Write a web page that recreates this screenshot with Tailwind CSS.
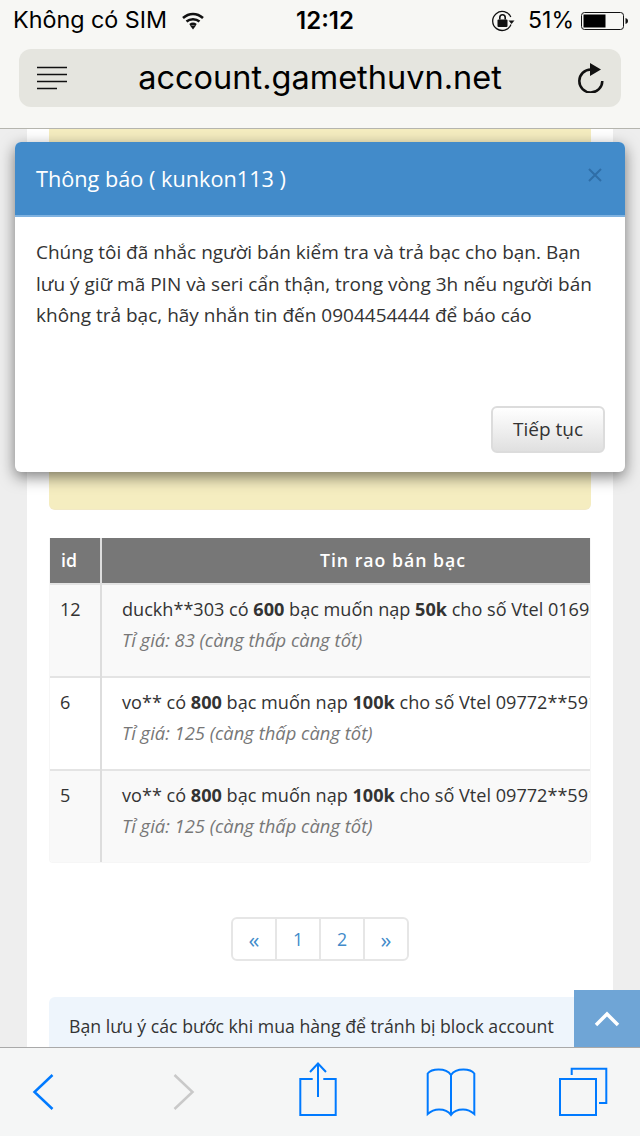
<!DOCTYPE html>
<html lang="en">
  <head>
    <meta charset="UTF-8" />
    <meta name="viewport" content="width=device-width, initial-scale=1.0" />
    <title>account.gamethuvn.net</title>
    <script src="https://cdn.jsdelivr.net/npm/@tailwindcss/browser@4"></script>
  </head>
  <body class="relative h-[1136px] w-[640px] overflow-hidden bg-[#eeeeee] font-['Open_Sans',sans-serif] text-[#333333]">
    <div class="flex h-full flex-col">
      <!-- Safari top bar -->
      <header class="h-[129px] shrink-0 border-b border-[#b5b5ae] bg-[#f7f7f4] font-['Inter',sans-serif] text-black">
        <div class="flex h-[41px] items-center justify-between pl-[13px] pr-[11px]">
          <div class="flex w-[240px] items-center">
            <span class="text-[23.300px]">Không có SIM</span>
            <svg class="ml-[15px]" width="22" height="18" viewBox="0 0 22 18" fill="none" stroke="#111" stroke-width="2.500">
              <path d="M1 6C7 .5 15 .5 21 6" />
              <path d="M4.500 9.500C8 6.500 14 6.500 17.500 9.500" />
              <path d="M8 13C9.800 11.600 12.200 11.600 14 13" />
              <path d="M8 13.500L11 17.500L14 13.500Z" fill="#111" stroke="none" />
            </svg>
          </div>
          <span class="text-[24px] font-semibold">12:12</span>
          <div class="flex w-[232px] items-center justify-end">
            <svg width="24" height="24" viewBox="0 0 24 24" fill="none" stroke="#111" stroke-width="1.300">
              <path d="M20 15.500A9.500 9.500 0 1 1 19.800 8" />
              <path d="M17.500 11.500H23.500L20.500 15Z" fill="#111" stroke="none" />
              <rect x="6.500" y="10.500" width="10" height="7.500" rx="1" fill="#111" stroke="none" />
              <path d="M8.800 10.500V8.500A2.700 2.700 0 0 1 14.200 8.500V10.500" stroke-width="1.600" />
            </svg>
            <span class="ml-[13px] text-[23px]">51%</span>
            <svg class="ml-[7px]" width="48" height="20" viewBox="0 0 48 20">
              <rect x=".5" y="1.500" width="42" height="17" rx="3" fill="none" stroke="#111" />
              <rect x="2.500" y="3.500" width="22" height="13" fill="#000" />
              <path d="M44.500 7C46 7.300 47 8.500 47 10S46 12.700 44.500 13Z" fill="#111" />
            </svg>
          </div>
        </div>
        <div class="mx-[19px] mt-[8px] flex h-[58px] items-center justify-between rounded-[12px] bg-[#e5e5df] pl-[18px] pr-[17px]">
          <svg width="30" height="24" viewBox="0 0 30 24" stroke="#111" stroke-width="1.700">
            <path d="M0 1.500H30M0 8.500H30M0 15.500H30M0 22.500H20" />
          </svg>
          <span class="mr-[4px] text-[32.500px] leading-none">account.gamethuvn.net</span>
          <svg width="27" height="30" viewBox="0 0 27 30" fill="none" stroke="#111" stroke-width="2.500">
            <path d="M14 6.500A11.500 11.500 0 1 0 25.300 18" />
            <path d="M13 0L24 6.500L13 13Z" fill="#111" stroke="none" />
          </svg>
        </div>
      </header>

      <!-- Page behind the dialog -->
      <main class="mx-[27px] min-h-0 flex-1 overflow-hidden bg-white px-[22px] text-[17.700px]">
        <div class="h-[381px] rounded-b-[6px] border-b border-[#f2e9c6] bg-[#f5edc0]"></div>

        <div class="mt-[28px] w-[542px] overflow-hidden rounded-b border-x border-b border-t-0 border-[#f6f6f6]">
          <table class="w-[760px] table-fixed border-collapse text-[18.100px]">
            <thead>
              <tr class="h-[46px] bg-[#777777] text-[17.700px] text-white">
                <th class="w-[51px] border-r-2 border-[#dddddd] pl-[11px] text-left font-semibold">id</th>
                <th class="w-[709px] pr-[126px] text-center font-semibold tracking-[1px]">Tin rao bán bạc</th>
              </tr>
            </thead>
            <tbody>
              <tr class="h-[93px] border-t-2 border-[#e4e4e4] bg-[#f9f9f9] align-top">
                <td class="border-r-2 border-[#dddddd] pt-[11px] pl-[10px]">12</td>
                <td class="pt-[11px] pl-[20px]">
                  <p class="whitespace-nowrap">duckh**303 có <b>600</b> bạc muốn nạp <b>50k</b> cho số Vtel 01696**123</p>
                  <p class="mt-[3px] text-[18.400px] italic text-[#777777]">Tỉ giá: 83 (càng thấp càng tốt)</p>
                </td>
              </tr>
              <tr class="h-[93px] border-t-2 border-[#e4e4e4] bg-white align-top">
                <td class="border-r-2 border-[#dddddd] pt-[11px] pl-[10px]">6</td>
                <td class="pt-[11px] pl-[20px]">
                  <p class="whitespace-nowrap">vo** có <b>800</b> bạc muốn nạp <b>100k</b> cho số Vtel 09772**591</p>
                  <p class="mt-[3px] text-[18.400px] italic text-[#777777]">Tỉ giá: 125 (càng thấp càng tốt)</p>
                </td>
              </tr>
              <tr class="h-[92px] border-t-2 border-[#e4e4e4] bg-[#f9f9f9] align-top">
                <td class="border-r-2 border-[#dddddd] pt-[11px] pl-[10px]">5</td>
                <td class="pt-[11px] pl-[20px]">
                  <p class="whitespace-nowrap">vo** có <b>800</b> bạc muốn nạp <b>100k</b> cho số Vtel 09772**591</p>
                  <p class="mt-[3px] text-[18.400px] italic text-[#777777]">Tỉ giá: 125 (càng thấp càng tốt)</p>
                </td>
              </tr>
            </tbody>
          </table>
        </div>

        <!-- Pagination -->
        <nav class="mt-[54px] flex justify-center">
          <div class="flex h-[44px] w-[178px] rounded-[6px] border-2 border-[#e6e6e6] text-[#428bca]">
            <a class="flex flex-1 items-center justify-center border-r-2 border-[#e6e6e6] text-[22px]">«</a>
            <a class="flex flex-1 items-center justify-center border-r-2 border-[#e6e6e6]">1</a>
            <a class="flex flex-1 items-center justify-center border-r-2 border-[#e6e6e6]">2</a>
            <a class="flex flex-1 items-center justify-center text-[22px]">»</a>
          </div>
        </nav>

        <div class="mt-[36px] h-[60px] rounded-t-[6px] bg-[#eef5fc] px-[20px] pt-[16px] whitespace-nowrap">
          Bạn lưu ý các bước khi mua hàng để tránh bị block account
        </div>
      </main>

      <!-- Safari bottom bar -->
      <footer class="relative z-10 h-[89px] shrink-0 border-t border-[#a9a9a9] bg-[#f5f6f6]">
        <div class="flex h-full items-start">
          <svg class="ml-[32px] mt-[26px]" width="22" height="36" viewBox="0 0 22 36" fill="none" stroke="#007aff" stroke-width="2.500">
            <path d="M20.500 1L2.500 18L20.500 35" />
          </svg>
          <svg class="ml-[119px] mt-[26px]" width="22" height="36" viewBox="0 0 22 36" fill="none" stroke="#c9c9c9" stroke-width="2.500">
            <path d="M1.500 1L19.500 18L1.500 35" />
          </svg>
          <svg class="ml-[103px] mt-[14px]" width="40" height="56" viewBox="0 0 40 56" fill="none" stroke="#007aff" stroke-width="2">
            <path d="M14.700 17H2.300V53H37.700V17H25.300" />
            <path d="M20 1.500V35M12 10L20 1.500L28 10" />
          </svg>
          <svg class="ml-[87px] mt-[19px]" width="52" height="50" viewBox="0 0 52 50" fill="none" stroke="#007aff" stroke-width="2">
            <path d="M26 8C23 3.500 18 2.500 13.500 2.500C9 2.500 5 3.500 2.700 6.500V47C6 44 10 42.500 14 42.500C19 42.500 23.500 44.500 26 48C28.500 44.500 33 42.500 38 42.500C42 42.500 46 44 49.300 47V6.500C47 3.500 43 2.500 38.500 2.500C34 2.500 29 3.500 26 8V48" />
          </svg>
          <svg class="ml-[81px] mt-[18px]" width="51" height="52" viewBox="0 0 51 52" fill="none" stroke="#007aff" stroke-width="2">
            <rect x="2" y="13" width="36" height="36" />
            <path d="M13.700 9V2.700H48.300V37H41" />
          </svg>
        </div>
      </footer>
    </div>

    <!-- Scroll to top -->
    <div class="absolute left-[574px] top-[990px] flex h-[57px] w-[66px] items-center justify-center bg-[#6fa5d6]">
      <svg width="26" height="16" viewBox="0 0 26 16" fill="none" stroke="#fff" stroke-width="3.500">
        <path d="M2 14L13 3L24 14" />
      </svg>
    </div>

    <!-- Dialog -->
    <div class="absolute left-[15px] top-[142px] flex h-[330px] w-[610px] flex-col overflow-hidden rounded-[6px] bg-white shadow-[0_5px_15px_rgba(0,0,0,0.5)]">
      <div class="relative flex h-[75px] shrink-0 items-center border-b-2 border-[#7fb2e0] bg-[#428bca] pt-[2px] pl-[21px] text-[21.700px] text-white">
        Thông báo ( kunkon113 )
        <svg class="absolute right-[23px] top-[26px]" width="14" height="14" viewBox="0 0 14 14" stroke="#2f6ea8" stroke-width="2">
          <path d="M1 1L13 13M13 1L1 13" />
        </svg>
      </div>
      <div class="px-[21px] pt-[20px] text-[19px] leading-[31.500px] text-[#333333]">
        Chúng tôi đã nhắc người bán kiểm tra và trả bạc cho bạn. Bạn lưu ý giữ mã PIN và seri cẩn thận, trong vòng 3h nếu người bán không trả bạc, hãy nhắn tin đến 0904454444 để báo cáo
      </div>
      <div class="mt-auto flex justify-end pb-[19px] pr-[20px]">
        <button class="h-[47px] w-[114px] rounded-[6px] border-2 border-[#dcdcdc] bg-gradient-to-b from-white to-[#e0e0e0] text-[19px] text-[#333333]">Tiếp tục</button>
      </div>
    </div>
  </body>
</html>
